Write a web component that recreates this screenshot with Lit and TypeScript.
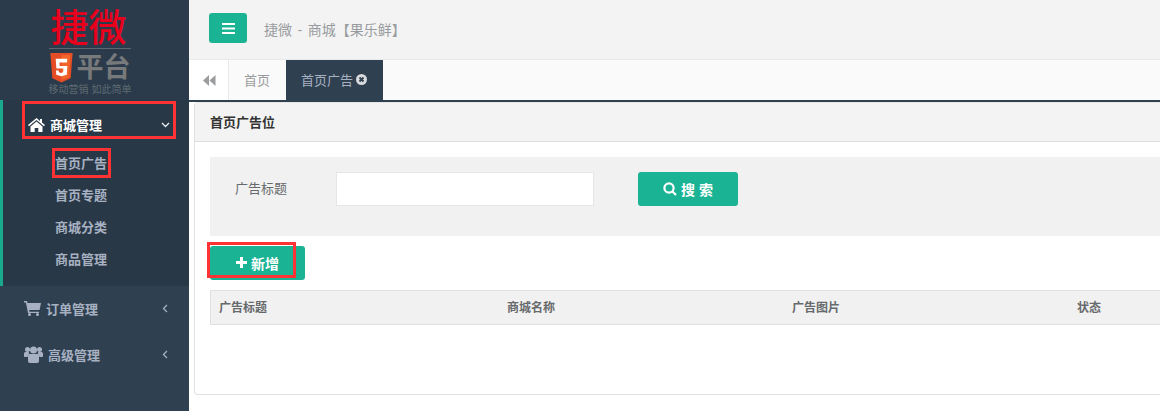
import { LitElement, html, css } from "lit";
import { customElement } from "lit/decorators.js";

@customElement("app-root")
export class AppRoot extends LitElement {
  static styles = css`
    :host {
      display: block;
      width: 1160px;
      height: 411px;
      overflow: hidden;
      font-family: "Open Sans", "Noto Sans CJK SC", sans-serif;
      font-size: 13px;
      position: relative;
    }
    * { box-sizing: border-box; }
    .app { display: flex; height: 411px; width: 1160px; }
    .side { width: 189px; flex: none; background: #2f4050; display: flex; flex-direction: column; }
    .logo { height: 100px; background: #2b3b4b; display: flex; flex-direction: column; align-items: center; padding: 8px 9px 0 0; overflow: hidden; }
    .brand { font-size: 38px; line-height: 40px; height: 40px; margin-right: 3px; color: #e8001c; font-weight: 500; font-family: "Liberation Sans", "Noto Sans CJK SC", sans-serif; white-space: nowrap; }
    .rule { width: 82px; height: 1px; background: #5b6670; flex: none; }
    .h5 { display: flex; align-items: flex-start; gap: 4px; height: 31px; margin-top: 4px; flex: none; }
    .ping { font-size: 27px; line-height: 31px; height: 31px; color: #77797b; font-weight: 700; font-family: "Liberation Sans", "Noto Sans CJK SC", sans-serif; }
    .slogan { font-size: 10px; line-height: 12px; color: #5f6a72; white-space: nowrap; font-family: "Liberation Sans", "Noto Sans CJK SC", sans-serif; }
    .group { background: #293846; border-left: 3px solid #19aa8d; height: 186px; }
    .item { display: flex; align-items: center; font-weight: 600; color: #a7b1c2; }
    .group .item.head { height: 46px; padding: 3px 0 0 25px; color: #fff; }
    .item svg.ico { flex: none; }
    .label { margin-left: 5px; }
    .chev { margin-left: auto; margin-right: 19px; flex: none; }
    .sub { display: flex; flex-direction: column; padding: 0 0 0 52px; margin-top: 1px; }
    .sub a { height: 32px; line-height: 32px; color: #a7b1c2; font-weight: 600; }
    .other { height: 46px; padding: 0 0 2px 24px; }
    .main { flex: 1; min-width: 0; background: #fff; display: flex; flex-direction: column; }
    .top { height: 59px; background: #f3f3f4; display: flex; align-items: flex-start; padding: 13px 0 0 20px; flex: none; }
    .menu { width: 38px; height: 30px; background: #1ab394; border-radius: 3px; display: flex; align-items: center; justify-content: center; }
    .crumb { color: #999c9e; margin: 8px 0 0 17px; line-height: 18px; font-size: 14px; word-spacing: 2px; }
    .tabs { height: 43px; flex: none; display: flex; background: #fafafa; border-top: 1px solid #e7eaec; border-bottom: 2px solid #2f4050; }
    .back { width: 40px; background: #fff; border-right: 1px solid #e7eaec; display: flex; align-items: center; justify-content: center; padding-left: 1px; }
    .tab { display: flex; align-items: center; padding: 0 15px 2px; color: #999c9e; height: 40px; }
    .tab.first { width: 57px; }
    .tab.on { background: #2f4050; color: #a7b1c2; width: 97px; gap: 3px; white-space: nowrap; }
    .panel { flex: 1; margin-left: 5px; background: #fff; border-left: 1px solid #e1e1e1; border-top: 1px solid #e7e7e7; border-bottom: 1px solid #e1e1e1; border-radius: 4px 0 0 4px; margin-bottom: 16px; display: flex; flex-direction: column; min-height: 0; }
    .ptitle { height: 39px; flex: none; background: #f3f3f3; border-bottom: 1px solid #dedede; display: flex; align-items: center; padding: 0 0 2px 15px; font-weight: 600; color: #333; }
    .pbody { padding: 15px 0 0 15px; }
    .search { height: 79px; background: #f1f1f1; display: flex; align-items: flex-start; padding: 15px 0 0 25px; }
    .search label { width: 101px; line-height: 33px; color: #676a6c; }
    .input { width: 258px; height: 34px; background: #fff; border: 1px solid #e5e6e7; }
    .btn { background: #1ab394; color: #fff; border-radius: 3px; font-weight: 700; font-size: 14px; display: flex; align-items: center; justify-content: center; }
    .sbtn { width: 100px; height: 34px; margin-left: 44px; gap: 4px; padding-bottom: 1px; }
    .sbtn span { letter-spacing: 4px; margin-right: -4px; }
    .add { width: 95px; height: 34px; margin-top: 10px; gap: 4px; padding-bottom: 1px; }
    .thead { margin-top: 10px; height: 35px; background: #f1f1f1; border: 1px solid #e0e0e0; border-right: 0; display: grid; grid-template-columns: 288px 285px 285px 1fr; align-items: center; padding: 0 0 1px 8px; font-weight: 600; color: #676a6c; font-size: 12px; }
    .mark { position: absolute; border: 3px solid #f33; pointer-events: none; }
    .m1 { left: 22px; top: 101px; width: 154px; height: 38px; }
    .m2 { left: 52px; top: 148px; width: 59px; height: 30px; }
    .m3 { left: 207px; top: 242px; width: 89px; height: 36px; }
  `;

  private ch(down: boolean, color: string) {
    return html`<svg class="chev" width="9" height="9" viewBox="0 0 9 9" fill="none" stroke=${color} stroke-width="1.3">
      <path d=${down ? "M1 3l3.5 3.5L8 3" : "M6 1L2.5 4.5 6 8"} /></svg>`;
  }

  render() {
    return html`
      <div class="app">
        <aside class="side">
          <div class="logo">
            <div class="brand">捷微</div>
            <div class="rule"></div>
            <div class="h5">
              <svg width="23" height="30" viewBox="0 0 23 31">
                <path d="M0 0h23l-2 26-9.500 4.500L2 26z" fill="#e44d26" />
                <path d="M11.500 2v26l7.500-3 1.800-23z" fill="#f16529" />
                <path d="M17.500 6H5.500l.7 10h7.300l-.3 4-2.200.7-2.200-.7-.1-2H5.800l.3 4.400 5.400 1.700 5.400-1.700.7-8.900H9.600l-.2-3.700h7.800z" fill="#fff" />
              </svg>
              <span class="ping">平台</span>
            </div>
            <div class="slogan">移动营销 如此简单</div>
          </div>
          <div class="group">
            <div class="item head">
              <svg class="ico" width="17" height="14" viewBox="0 0 17 14" fill="#fff">
                <path d="M8.500 0L0 7l1 1.200 7.500-6.200L16 8.200 17 7l-3-2.500V1h-2v1.900z" />
                <path d="M8.500 3.500L2.500 8.400V14h4.200v-4h3.600v4h4.200V8.400z" />
              </svg>
              <span class="label">商城管理</span>
              ${this.ch(true, "#e8eef5")}
            </div>
            <div class="sub">
              <a>首页广告</a><a>首页专题</a><a>商城分类</a><a>商品管理</a>
            </div>
          </div>
          <div class="item other">
            <svg class="ico" width="17" height="15" viewBox="0 0 17 15" fill="#a7b1c2">
              <path d="M0 0h3l.6 2H17l-1.400 7H5.200l.4 1.700H15V12H4L1.900 1.400H0z" />
              <circle cx="5.500" cy="13.500" r="1.500" /><circle cx="13.500" cy="13.500" r="1.500" />
            </svg>
            <span class="label">订单管理</span>
            ${this.ch(false, "#a7b1c2")}
          </div>
          <div class="item other">
            <svg class="ico" width="19" height="17" viewBox="0 0 19 17" fill="#a7b1c2">
              <circle cx="3.500" cy="3.500" r="2.500" /><circle cx="15.500" cy="3.500" r="2.500" /><circle cx="9.500" cy="4" r="3.500" />
              <path d="M0 7.500C0 6.500 1 6 2 6h2.500l.8 1L3.500 11H1c-.6 0-1-.4-1-1zM19 7.500C19 6.500 18 6 17 6h-2.500l-.8 1 1.800 4H18c.6 0 1-.4 1-1z" />
              <path d="M5.500 8h8c1 0 1.500.8 1.500 2v5c0 1-.7 2-2 2H6c-1.300 0-2-1-2-2v-5c0-1.200.5-2 1.500-2z" />
            </svg>
            <span class="label">高级管理</span>
            ${this.ch(false, "#a7b1c2")}
          </div>
        </aside>
        <div class="main">
          <div class="top">
            <div class="menu">
              <svg width="13" height="11" viewBox="0 0 13 11" fill="#fff"><path d="M0 0h13v2H0zM0 4.500h13v2H0zM0 9h13v2H0z" /></svg>
            </div>
            <div class="crumb">捷微 - 商城【果乐鲜】</div>
          </div>
          <div class="tabs">
            <div class="back">
              <svg width="13" height="11" viewBox="0 0 13 11" fill="#9a9c9e"><path d="M6 0v11L0 5.500zM12.500 0v11l-6-5.500z" /></svg>
            </div>
            <div class="tab first">首页</div>
            <div class="tab on">首页广告
              <svg width="11" height="11" viewBox="0 0 11 11" style="flex:none">
                <circle cx="5.500" cy="5.500" r="5.500" fill="#d8dadd" />
                <path d="M3.500 3.500l4 4M7.500 3.500l-4 4" stroke="#2f4050" stroke-width="1.800" />
              </svg>
            </div>
          </div>
          <section class="panel">
            <div class="ptitle">首页广告位</div>
            <div class="pbody">
              <div class="search">
                <label>广告标题</label>
                <div class="input"></div>
                <div class="btn sbtn">
                  <svg width="14" height="14" viewBox="0 0 14 14" fill="none" stroke="#fff" stroke-width="2.200">
                    <circle cx="6" cy="6" r="4.600" /><path d="M9.500 9.500L13 13" />
                  </svg>
                  <span>搜索</span>
                </div>
              </div>
              <div class="btn add">
                <svg width="11" height="11" viewBox="0 0 11 11" fill="#fff"><path d="M4 0h3v4h4v3H7v4H4V7H0V4h4z" /></svg>
                <span>新增</span>
              </div>
              <div class="thead">
                <span>广告标题</span><span>商城名称</span><span>广告图片</span><span>状态</span>
              </div>
            </div>
          </section>
        </div>
      </div>
      <div class="mark m1"></div>
      <div class="mark m2"></div>
      <div class="mark m3"></div>
    `;
  }
}
